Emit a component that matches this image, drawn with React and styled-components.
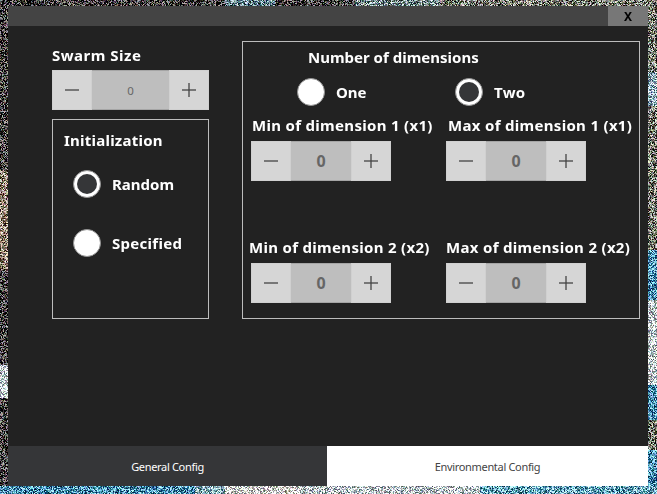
import React, { useEffect, useRef } from "react";
import styled, { createGlobalStyle } from "styled-components";

const GlobalStyle = createGlobalStyle`
  *, *::before, *::after { box-sizing: border-box; }
  body { margin: 0; overflow: hidden; background: #222; }
`;

const Desktop = styled.main`
  position: relative;
  width: 657px;
  height: 494px;
  padding: 6px 9px 8px 8px;
  font-family: "Noto Sans", sans-serif;
`;

const Wallpaper = styled.canvas`
  position: absolute;
  inset: 0;
`;

const Window = styled.section`
  position: relative;
  width: 640px;
  height: 480px;
  display: flex;
  flex-direction: column;
  overflow: hidden;
  border-radius: 2px 2px 0 0;
  background: #222;
`;

const TitleBar = styled.header`
  height: 20px;
  display: flex;
  justify-content: flex-end;
  background: #444;
`;

const CloseButton = styled.button`
  width: 40px;
  height: 20px;
  padding: 1px 0 0;
  border: 0;
  background: #777;
  color: #000;
  font: 700 12px/20px "Noto Sans", sans-serif;
`;

const Body = styled.div`
  flex: 1;
  display: flex;
  align-items: flex-start;
  gap: 33px;
  padding: 15px 8px 0 44px;
`;

const LeftColumn = styled.div`
  width: 157px;
  padding-top: 4px;
`;

const Label = styled.div`
  height: 20px;
  margin-left: ${(p) => p.$indent || 0}px;
  color: #fff;
  font-size: 15px;
  font-weight: 700;
  line-height: 20px;
  letter-spacing: ${(p) => p.$track || 0}px;
  white-space: nowrap;
`;

const Panel = styled.section`
  border: 1px solid #bdbdbd;
`;

const InitPanel = styled(Panel)`
  height: 200px;
  margin-top: 9px;
  padding: 10px 0 0 11px;
`;

const DimensionPanel = styled(Panel)`
  width: 398px;
  height: 278px;
  padding-top: 5px;
`;

const RadioStack = styled.div`
  display: flex;
  flex-direction: column;
  gap: 31px;
  padding: 20px 0 0 9px;
`;

const RadioRow = styled.div`
  display: grid;
  grid-template-columns: 158px 1fr;
  margin: 11px 0 0 54px;
`;

const Option = styled.label`
  display: flex;
  align-items: center;
  gap: 11px;
  height: 28px;
`;

const Dot = styled.span`
  width: 28px;
  height: 28px;
  border: 1px solid #929292;
  border-radius: 50%;
  background: #fff;
  display: grid;
  place-items: center;

  &::after {
    content: "";
    width: 20px;
    height: 20px;
    border-radius: 50%;
    background: ${(p) => (p.$on ? "#353638" : "#fff")};
  }
`;

const Fields = styled.div`
  display: grid;
  grid-template-columns: 195px 1fr;
  row-gap: 56px;
  margin: 9px 0 0 8px;
`;

const StepperBox = styled.div`
  display: grid;
  grid-template-columns: 40px 1fr 40px;
  width: ${(p) => p.$width}px;
  height: 40px;
  margin-top: ${(p) => p.$top || 0}px;
`;

const StepButton = styled.button`
  display: grid;
  place-items: center;
  padding: 0;
  border: 1px solid #d0d0d0;
  background: #d6d6d6;
`;

const StepValue = styled.output`
  height: 40px;
  border-top: 1px solid #a5a5a5;
  border-bottom: 1px solid #a5a5a5;
  background: #bebebe;
  color: #666;
  text-align: center;
  line-height: 39px;
  font-size: ${(p) => (p.$small ? 11.5 : 16)}px;
  font-weight: ${(p) => (p.$small ? 400 : 700)};
`;

const Tabs = styled.nav`
  height: 40px;
  display: grid;
  grid-template-columns: 319px 321px;
`;

const Tab = styled.button`
  padding: 2px 0 0;
  border: 0;
  background: ${(p) => (p.$active ? "#fff" : "#353638")};
  color: ${(p) => (p.$active ? "#444" : "#fff")};
  font: 400 11px/16px "Noto Sans", sans-serif;
  letter-spacing: -0.32px;
`;

function StepIcon({ plus }) {
  return (
    <svg width="14" height="14" viewBox="0 0 14 14" fill="#444" fillOpacity="0.8">
      <rect x="0" y="6.2" width="14" height="1.6" />
      {plus && <rect x="6.2" y="0" width="1.6" height="14" />}
    </svg>
  );
}

function Stepper({ width = 140, top = 6, small = false }) {
  return (
    <StepperBox $width={width} $top={top}>
      <StepButton aria-label="Decrease"><StepIcon /></StepButton>
      <StepValue $small={small}>0</StepValue>
      <StepButton aria-label="Increase"><StepIcon plus /></StepButton>
    </StepperBox>
  );
}

function Radio({ on, children, track }) {
  return (
    <Option>
      <Dot $on={on} />
      <Label as="span" $track={track}>{children}</Label>
    </Option>
  );
}

const DARK = [62, 58, 58];
const TAN = [140, 125, 108];
const OLIVE = [115, 118, 108];
const BLUE = [75, 145, 180];
const PALE = [195, 208, 212];

const EDGES = {
  top: [[225, DARK], [275, [95, 125, 135]], [355, DARK], [440, [125, 145, 145]], [657, OLIVE]],
  left: [[170, DARK], [270, TAN], [365, DARK], [398, PALE], [494, DARK]],
  right: [[72, OLIVE], [106, [145, 175, 190]], [250, OLIVE], [300, BLUE], [385, PALE], [420, BLUE], [450, OLIVE], [494, BLUE]],
  bottom: [[195, BLUE], [225, [140, 180, 190]], [300, [215, 215, 212]], [480, [190, 202, 206]], [657, [105, 165, 190]]],
};

const toneAt = (stops, position) => stops.find(([end]) => position < end)[1];

function Noise() {
  const ref = useRef(null);
  useEffect(() => {
    const ctx = ref.current.getContext("2d");
    const img = ctx.createImageData(657, 494);
    let seed = 9137;
    const rand = () => {
      seed = (seed * 1664525 + 1013904223) >>> 0;
      return seed / 4294967296;
    };
    for (let y = 0; y < 494; y++) {
      for (let x = 0; x < 657; x++) {
        const base =
          y < 6 ? toneAt(EDGES.top, x)
          : y >= 486 ? toneAt(EDGES.bottom, x)
          : x < 8 ? toneAt(EDGES.left, y)
          : toneAt(EDGES.right, y);
        const shade = (rand() - 0.5) * 250;
        const i = (y * 657 + x) * 4;
        for (let c = 0; c < 3; c++) img.data[i + c] = base[c] + shade + (rand() - 0.5) * 50;
        img.data[i + 3] = 255;
      }
    }
    ctx.putImageData(img, 0, 0);
  }, []);
  return <Wallpaper ref={ref} width={657} height={494} />;
}

const FIELDS = [
  { text: "Min of dimension 1 (x1)", indent: 1 },
  { text: "Max of dimension 1 (x1)", indent: 2 },
  { text: "Min of dimension 2 (x2)", indent: -2 },
  { text: "Max of dimension 2 (x2)", indent: 0 },
];

export default function App() {
  return (
    <>
      <GlobalStyle />
      <Desktop>
        <Noise />
        <Window>
          <TitleBar><CloseButton>X</CloseButton></TitleBar>
          <Body>
            <LeftColumn>
              <Label $track={0.5}>Swarm Size</Label>
              <Stepper width={157} top={5} small />
              <InitPanel>
                <Label $track={0.23}>Initialization</Label>
                <RadioStack>
                  <Radio on>Random</Radio>
                  <Radio track={0.28}>Specified</Radio>
                </RadioStack>
              </InitPanel>
            </LeftColumn>
            <DimensionPanel>
              <Label $indent={65}>Number of dimensions</Label>
              <RadioRow>
                <Radio>One</Radio>
                <Radio on track={0.3}>Two</Radio>
              </RadioRow>
              <Fields>
                {FIELDS.map((f) => (
                  <div key={f.text}>
                    <Label $indent={f.indent} $track={0.31}>{f.text}</Label>
                    <Stepper />
                  </div>
                ))}
              </Fields>
            </DimensionPanel>
          </Body>
          <Tabs>
            <Tab>General Config</Tab>
            <Tab $active>Environmental Config</Tab>
          </Tabs>
        </Window>
      </Desktop>
    </>
  );
}
